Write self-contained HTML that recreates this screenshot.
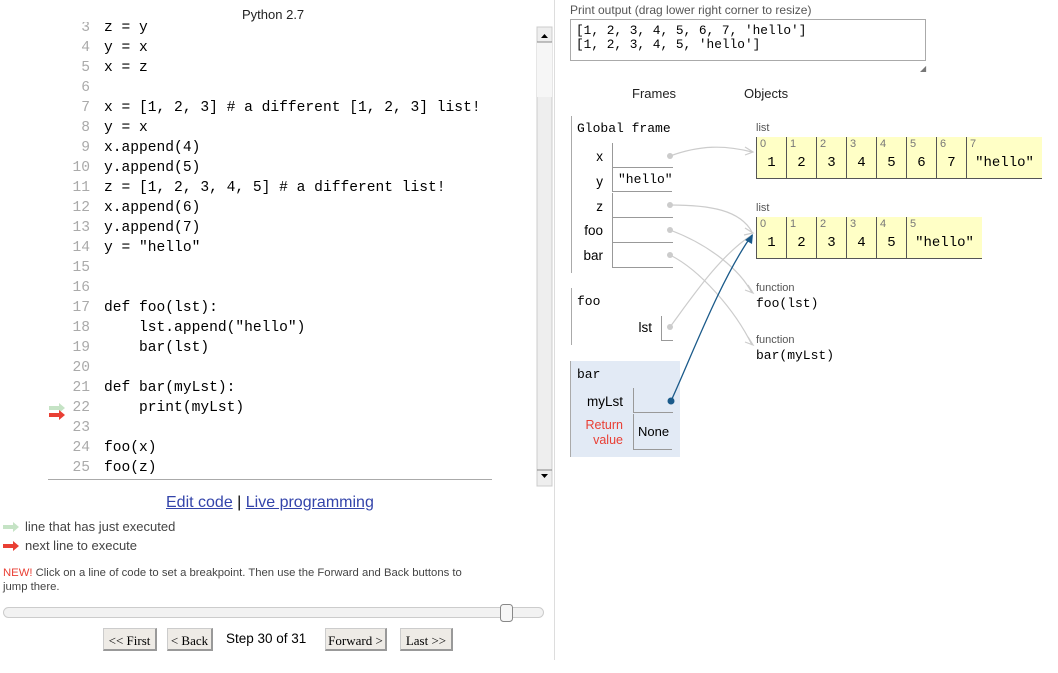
<!DOCTYPE html>
<html><head><meta charset="utf-8"><style>
body{margin:0;width:1058px;height:673px;background:#fff;position:relative;overflow:hidden;font-family:"Liberation Sans",sans-serif;color:#000}
.a{position:absolute;white-space:pre}
.mono{font-family:"Liberation Mono",monospace}
.ln{position:absolute;left:48px;width:42px;text-align:right;color:#aaa;font-family:"Liberation Mono",monospace;font-size:14.6px;line-height:20px}
.cd{position:absolute;left:104px;font-family:"Liberation Mono",monospace;font-size:14.6px;line-height:20px;white-space:pre}
.cell{position:absolute;border-left:1px solid #999;border-bottom:1px solid #999;height:24px}
.vn{position:absolute;font-size:13.5px;text-align:right;width:50px}
.lc{position:absolute;top:0;height:41px;border-left:1px solid #555;border-bottom:1px solid #555;background:#ffffc6;width:29px}
.lc i{position:absolute;left:3px;top:1px;font-style:normal;font-size:11px;color:#777}
.lc b{position:absolute;left:0;right:0;top:18px;text-align:center;font-weight:normal;font-family:"Liberation Mono",monospace;font-size:14px}
.btn{position:absolute;top:628px;height:23px;background:#eeebe6;border:1px solid #ccc;border-bottom:2px solid #999;border-right:2px solid #999;font-family:"Liberation Serif",serif;font-size:13px;line-height:23px;text-align:center;box-sizing:border-box}
</style></head><body>
<div class="a" style="left:242px;top:7px;font-size:13px;color:#222">Python 2.7</div>
<div style="position:absolute;left:0;top:22px;width:536px;height:458px;overflow:hidden">
<div style="position:absolute;left:0;top:-22px;width:536px;height:500px">
<div class="ln" style="top:18px">3</div><div class="cd" style="top:18px">z = y</div>
<div class="ln" style="top:38px">4</div><div class="cd" style="top:38px">y = x</div>
<div class="ln" style="top:58px">5</div><div class="cd" style="top:58px">x = z</div>
<div class="ln" style="top:78px">6</div>
<div class="ln" style="top:98px">7</div><div class="cd" style="top:98px">x = [1, 2, 3] # a different [1, 2, 3] list!</div>
<div class="ln" style="top:118px">8</div><div class="cd" style="top:118px">y = x</div>
<div class="ln" style="top:138px">9</div><div class="cd" style="top:138px">x.append(4)</div>
<div class="ln" style="top:158px">10</div><div class="cd" style="top:158px">y.append(5)</div>
<div class="ln" style="top:178px">11</div><div class="cd" style="top:178px">z = [1, 2, 3, 4, 5] # a different list!</div>
<div class="ln" style="top:198px">12</div><div class="cd" style="top:198px">x.append(6)</div>
<div class="ln" style="top:218px">13</div><div class="cd" style="top:218px">y.append(7)</div>
<div class="ln" style="top:238px">14</div><div class="cd" style="top:238px">y = "hello"</div>
<div class="ln" style="top:258px">15</div>
<div class="ln" style="top:278px">16</div>
<div class="ln" style="top:298px">17</div><div class="cd" style="top:298px">def foo(lst):</div>
<div class="ln" style="top:318px">18</div><div class="cd" style="top:318px">    lst.append("hello")</div>
<div class="ln" style="top:338px">19</div><div class="cd" style="top:338px">    bar(lst)</div>
<div class="ln" style="top:358px">20</div>
<div class="ln" style="top:378px">21</div><div class="cd" style="top:378px">def bar(myLst):</div>
<div class="ln" style="top:398px">22</div><div class="cd" style="top:398px">    print(myLst)</div>
<div class="ln" style="top:418px">23</div>
<div class="ln" style="top:438px">24</div><div class="cd" style="top:438px">foo(x)</div>
<div class="ln" style="top:458px">25</div><div class="cd" style="top:458px">foo(z)</div>
</div></div>
<svg class="a" style="left:0;top:0" width="1058" height="673">
<line x1="48" y1="479.5" x2="492" y2="479.5" stroke="#aaa"/>
<rect x="537" y="27" width="15" height="459" fill="#eee" stroke="#ccc"/>
<rect x="537" y="42" width="15" height="55" fill="#f6f6f6"/>
<path d="M541 38h7l-3.5-4z" fill="#000"/><line x1="537" y1="42" x2="552" y2="42" stroke="#888"/>
<path d="M541 474h7l-3.5 4z" fill="#000"/><line x1="537" y1="470" x2="552" y2="470" stroke="#888"/>
<line x1="554.5" y1="0" x2="554.5" y2="660" stroke="#ddd"/>
<!-- code arrows -->
<path d="M49 406h10v-3l6 5-6 5v-3h-10z" fill="#c5e3c5"/>
<path d="M49 413h10v-3l6 5-6 5v-3h-10z" fill="#e93f34"/>
<path d="M3 525h10v-3l6 5-6 5v-3h-10z" fill="#c5e3c5"/>
<path d="M3 544h10v-3l6 5-6 5v-3h-10z" fill="#e93f34"/>
<!-- slider -->
<rect x="3.5" y="607.5" width="540" height="10" rx="5" fill="#f2f2f2" stroke="#ccc"/>
<rect x="500.5" y="604.5" width="12" height="17" rx="3" fill="#f6f6f6" stroke="#888"/>
<!-- frames -->
<line x1="571.5" y1="116" x2="571.5" y2="273" stroke="#aaa"/>
<line x1="571.5" y1="288" x2="571.5" y2="345" stroke="#aaa"/>
<rect x="570" y="361" width="110" height="96" fill="#e2eaf5"/>
<line x1="570.5" y1="361" x2="570.5" y2="457" stroke="#aaa"/>
<g fill="none" stroke="#ccc" stroke-width="1.2">
<path d="M670 156 C700 145 725 145 752 152"/>
<path d="M670 205 C710 205 740 210 752 232"/>
<path d="M670 230 C710 245 740 270 752 293"/>
<path d="M670 255 C700 270 735 310 752 345"/>
<path d="M670 327 C690 300 720 255 752 235"/>
</g>
<g fill="#ccc"><circle cx="670" cy="156" r="3"/><circle cx="670" cy="205" r="3"/><circle cx="670" cy="230" r="3"/><circle cx="670" cy="255" r="3"/><circle cx="670" cy="327" r="3"/></g>
<g fill="none" stroke="#ccc" stroke-width="1.2">
<path d="M745 147l8 5-8 3"/><path d="M745 228l8 5-9 2"/><path d="M748 285l5 8-8-3"/><path d="M748 337l5 8-8-3"/>
</g>
<path d="M671 401 C690 360 720 280 752 235" fill="none" stroke="#1a5a8a" stroke-width="1.3"/>
<path d="M745 240l8-6-1 10z" fill="#1a5a8a"/>
<circle cx="671" cy="401" r="3.5" fill="#1a5a8a"/>
</svg>
<div class="a" style="left:166px;top:494px;font-size:16px;color:#3344aa"><u>Edit code</u> <span style="color:#000">|</span> <u>Live programming</u></div>
<div class="a" style="left:25px;top:519px;font-size:13px;color:#444">line that has just executed</div>
<div class="a" style="left:25px;top:538px;font-size:13px;color:#444">next line to execute</div>
<div class="a" style="left:3px;top:566px;font-size:11.3px;color:#444;line-height:14px"><span style="color:#e93f34">NEW!</span> Click on a line of code to set a breakpoint. Then use the Forward and Back buttons to
jump there.</div>
<div class="btn" style="left:103px;width:54px">&lt;&lt; First</div>
<div class="btn" style="left:167px;width:46px">&lt; Back</div>
<div class="a" style="left:226px;top:631px;font-size:13.5px">Step 30 of 31</div>
<div class="btn" style="left:325px;width:62px">Forward &gt;</div>
<div class="btn" style="left:400px;width:53px">Last &gt;&gt;</div>
<div class="a" style="left:570px;top:3px;font-size:12px;color:#555">Print output (drag lower right corner to resize)</div>
<div class="a mono" style="left:570px;top:19px;width:356px;height:42px;border:1px solid #aaa;font-size:12.8px;line-height:14px;padding:4px 0 0 5px;box-sizing:border-box">[1, 2, 3, 4, 5, 6, 7, 'hello']
[1, 2, 3, 4, 5, 'hello']</div>
<div class="a" style="left:920px;top:64px;font-size:8px;color:#777">◢</div>
<div class="a" style="left:632px;top:86px;font-size:13px;color:#222">Frames</div>
<div class="a" style="left:744px;top:86px;font-size:13px;color:#222">Objects</div>
<div class="a mono" style="left:577px;top:121px;font-size:13px">Global frame</div>
<div class="vn" style="left:553px;top:149px">x</div><div class="cell" style="left:612px;top:143px;width:60px"></div>
<div class="vn" style="left:553px;top:174px">y</div><div class="cell mono" style="left:612px;top:168px;width:60px;font-size:13px;line-height:24px;padding-left:5px;box-sizing:border-box">"hello"</div>
<div class="vn" style="left:553px;top:199px">z</div><div class="cell" style="left:612px;top:193px;width:60px"></div>
<div class="vn" style="left:553px;top:223px">foo</div><div class="cell" style="left:612px;top:218px;width:60px"></div>
<div class="vn" style="left:553px;top:248px">bar</div><div class="cell" style="left:612px;top:243px;width:60px"></div>
<div class="a mono" style="left:577px;top:294px;font-size:13px">foo</div>
<div class="vn" style="left:602px;top:320px">lst</div><div class="cell" style="left:661px;top:316px;width:11px"></div>
<div class="a mono" style="left:577px;top:367px;font-size:13px">bar</div>
<div class="vn" style="left:573px;top:394px">myLst</div><div class="cell" style="left:633px;top:388px;width:39px"></div>
<div class="a" style="left:583px;top:418px;font-size:12.5px;color:#e93f34;text-align:right;line-height:15px;width:40px">Return<br>value</div>
<div class="cell" style="left:633px;top:414px;width:39px;height:36px;font-size:13px;line-height:36px;padding-left:4px;box-sizing:border-box">None</div>
<div class="a" style="left:756px;top:122px;font-size:11px;color:#555">list</div>
<div class="a" style="left:756px;top:137px;width:290px;height:43px">
<div class="lc" style="left:0"><i>0</i><b>1</b></div><div class="lc" style="left:30px"><i>1</i><b>2</b></div><div class="lc" style="left:60px"><i>2</i><b>3</b></div><div class="lc" style="left:90px"><i>3</i><b>4</b></div><div class="lc" style="left:120px"><i>4</i><b>5</b></div><div class="lc" style="left:150px"><i>5</i><b>6</b></div><div class="lc" style="left:180px"><i>6</i><b>7</b></div><div class="lc" style="left:210px;width:75px;border-right:none"><i>7</i><b>"hello"</b></div>
</div>
<div class="a" style="left:756px;top:202px;font-size:11px;color:#555">list</div>
<div class="a" style="left:756px;top:217px;width:230px;height:43px">
<div class="lc" style="left:0"><i>0</i><b>1</b></div><div class="lc" style="left:30px"><i>1</i><b>2</b></div><div class="lc" style="left:60px"><i>2</i><b>3</b></div><div class="lc" style="left:90px"><i>3</i><b>4</b></div><div class="lc" style="left:120px"><i>4</i><b>5</b></div><div class="lc" style="left:150px;width:75px"><i>5</i><b>"hello"</b></div>
</div>
<div class="a" style="left:756px;top:282px;font-size:11px;color:#555">function</div>
<div class="a mono" style="left:756px;top:296px;font-size:13px">foo(lst)</div>
<div class="a" style="left:756px;top:334px;font-size:11px;color:#555">function</div>
<div class="a mono" style="left:756px;top:348px;font-size:13px">bar(myLst)</div>
</body></html>
